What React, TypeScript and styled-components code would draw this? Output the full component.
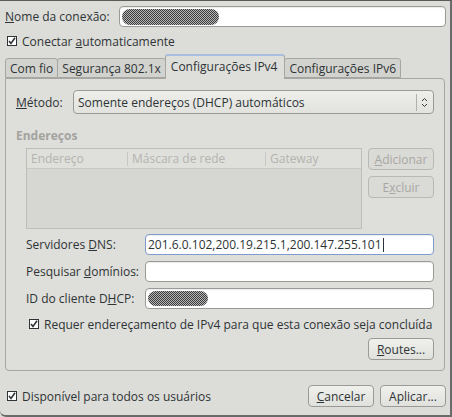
import React from "react";
import styled, { createGlobalStyle } from "styled-components";

const Global = createGlobalStyle`
  html, body { margin: 0; padding: 0; background: #dcdcd8; }
  body { font-family: "Open Sans", "DejaVu Sans", sans-serif; font-size: 12px; color: #2e3436; }
  * { box-sizing: border-box; }
`;

const Window = styled.div`
  width: 452px;
  height: 417px;
  background: #dcdcd8;
  border-top: 1px solid #5a5a5a;
  border-right: 2px solid #6b6b6b;
  border-bottom: 2px solid #6b6b6b;
  border-bottom-left-radius: 6px;
  padding: 5px 4px 0 5px;
  display: flex;
  flex-direction: column;
`;

const Row = styled.div<{ $mt?: number; $h?: number }>`
  display: flex;
  align-items: center;
  margin-top: ${(p) => p.$mt ?? 0}px;
  height: ${(p) => p.$h ?? 21}px;
  flex: none;
`;

const Label = styled.span<{ $w?: number }>`
  width: ${(p) => (p.$w ? `${p.$w}px` : "auto")};
  flex: none;
  white-space: nowrap;
  color: #2e3436;
`;

const U = styled.span`
  text-decoration: underline;
  text-underline-offset: 1px;
`;

const Input = styled.div<{ $focus?: boolean }>`
  flex: 1;
  height: 21px;
  background: #ffffff;
  border: 1px solid ${(p) => (p.$focus ? "#7f9ccc" : "#9a9a96")};
  border-radius: 4px;
  display: flex;
  align-items: center;
  padding-left: 2px;
  box-shadow: inset 0 1px 1px rgba(0, 0, 0, 0.08);
  white-space: nowrap;
  overflow: hidden;
`;

const Caret = styled.span`
  display: inline-block;
  width: 1px;
  height: 14px;
  background: #2e3436;
  margin-left: 1px;
`;

const Blur = styled.span<{ $w: number; $h: number }>`
  display: inline-block;
  width: ${(p) => p.$w}px;
  height: ${(p) => p.$h}px;
  border-radius: ${(p) => p.$h / 2}px;
  background-color: #8a8a8a;
  background-image: repeating-conic-gradient(#3a3a3a 0 25%, #b8b8b8 0 50%);
  background-size: 2px 2px;
`;

const CheckRow = styled.label<{ $ml?: number; $mt?: number }>`
  display: flex;
  align-items: center;
  gap: 5px;
  margin-left: ${(p) => p.$ml ?? 2}px;
  margin-top: ${(p) => p.$mt ?? 0}px;
  height: 18px;
  white-space: nowrap;
  flex: none;
`;

const Box = styled.span`
  width: 10px;
  height: 10px;
  border: 1px solid #2e3436;
  background: #fff;
  display: inline-flex;
  align-items: center;
  justify-content: center;
  flex: none;
`;

const Check = () => (
  <Box>
    <svg width="8" height="8" viewBox="0 0 8 8">
      <path d="M1 4 L3 6.5 L7 0.8" fill="none" stroke="#2e3436" strokeWidth="1.6" />
    </svg>
  </Box>
);

const Tabs = styled.div`
  display: flex;
  align-items: flex-end;
  margin-top: 4px;
  height: 24px;
  position: relative;
  z-index: 1;
  flex: none;
`;

const Tab = styled.div<{ $active?: boolean }>`
  height: ${(p) => (p.$active ? 25 : 20)}px;
  padding: ${(p) => (p.$active ? "0 7px 2px 5px" : "0 4px")};
  display: flex;
  align-items: center;
  border: 1px solid #a6a6a2;
  border-bottom: ${(p) => (p.$active ? "none" : "1px solid #a6a6a2")};
  border-top: ${(p) => (p.$active ? "2px solid #a9bddc" : "1px solid #a6a6a2")};
  border-radius: 3px 3px 0 0;
  background: ${(p) => (p.$active ? "#dededa" : "#d2d2ce")};
  margin-right: -1px;
  margin-bottom: ${(p) => (p.$active ? -1 : 0)}px;
  white-space: nowrap;
`;

const Panel = styled.div`
  height: 293px;
  flex: none;
  margin-right: 1px;
  border: 1px solid #a6a6a2;
  border-radius: 0 4px 4px 4px;
  background: #dededa;
  padding: 11px 10px 0 10px;
  display: flex;
  flex-direction: column;
`;

const Select = styled.div`
  flex: 1;
  height: 24px;
  border: 1px solid #9a9a96;
  border-radius: 4px;
  background: linear-gradient(#eeeeeb, #e2e2df);
  display: flex;
  align-items: center;
  padding-left: 4px;
`;

const SelectText = styled.span`
  flex: 1;
`;

const SelectArrow = styled.span`
  width: 16px;
  height: 17px;
  border-left: 1px solid #b0b0ac;
  display: flex;
  align-items: center;
  justify-content: center;
  margin-right: 1px;
`;

const Section = styled.div`
  margin-top: 14px;
  font-weight: bold;
  color: #a3a3a0;
  height: 16px;
  line-height: 16px;
  flex: none;
`;

const AddrArea = styled.div`
  display: flex;
  margin-top: 4px;
  margin-left: 10px;
  gap: 6px;
  flex: none;
`;

const Table = styled.div`
  width: 337px;
  height: 81px;
  border: 1px solid #bdbdb9;
  background: #d6d6d2;
  display: flex;
  flex-direction: column;
`;

const THead = styled.div`
  height: 20px;
  border-bottom: 1px solid #c8c8c4;
  background: #dfdfdb;
  display: grid;
  grid-template-columns: 100px 138px 1fr;
  align-items: center;
`;

const TH = styled.span<{ $sep?: boolean }>`
  color: #b4b4b0;
  padding-left: 4px;
  border-left: ${(p) => (p.$sep ? "1px solid #c6c6c2" : "none")};
  height: 14px;
  line-height: 14px;
  white-space: nowrap;
`;

const SideButtons = styled.div`
  display: flex;
  flex-direction: column;
  gap: 6px;
`;

const Button = styled.div<{ $disabled?: boolean; $w?: number }>`
  width: ${(p) => p.$w ?? 66}px;
  height: 22px;
  border: 1px solid ${(p) => (p.$disabled ? "#b8b8b4" : "#9a9a96")};
  border-radius: 4px;
  background: ${(p) => (p.$disabled ? "#dadad6" : "linear-gradient(#f0f0ed, #e0e0dd)")};
  color: ${(p) => (p.$disabled ? "#a8a8a4" : "#2e3436")};
  display: flex;
  align-items: center;
  justify-content: center;
  white-space: nowrap;
  flex: none;
`;

const FormRow = styled(Row)`
  margin-left: 10px;
`;

const RightRow = styled.div<{ $mt?: number }>`
  display: flex;
  justify-content: flex-end;
  margin-top: ${(p) => p.$mt ?? 0}px;
  flex: none;
`;

const Footer = styled.div`
  display: flex;
  align-items: center;
  margin-top: 14px;
  gap: 6px;
  flex: none;
`;

const Spacer = styled.div`
  flex: 1;
`;

export default function App() {
  return (
    <>
      <Global />
      <Window>
        <Row $h={21}>
          <Label $w={114}>
            <U>N</U>ome da conexão:
          </Label>
          <Input>
            <Blur $w={97} $h={16} />
          </Input>
        </Row>
        <CheckRow $mt={5}>
          <Check />
          <span>
            Conectar <U>a</U>utomaticamente
          </span>
        </CheckRow>
        <Tabs>
          <Tab>Com fio</Tab>
          <Tab>Segurança 802.1x</Tab>
          <Tab $active>Configurações IPv4</Tab>
          <Tab>Configurações IPv6</Tab>
        </Tabs>
        <Panel>
          <Row $h={24}>
            <Label $w={57}>
              <U>M</U>étodo:
            </Label>
            <Select>
              <SelectText>Somente endereços (DHCP) automáticos</SelectText>
              <SelectArrow>
                <svg width="7" height="11" viewBox="0 0 7 11">
                  <path d="M1 4 L3.5 1.5 L6 4 M1 7 L3.5 9.5 L6 7" fill="none" stroke="#3a3a3a" strokeWidth="1" />
                </svg>
              </SelectArrow>
            </Select>
          </Row>
          <Section>Endereços</Section>
          <AddrArea>
            <Table>
              <THead>
                <TH>Endereço</TH>
                <TH $sep>Máscara de rede</TH>
                <TH $sep>Gateway</TH>
              </THead>
            </Table>
            <SideButtons>
              <Button $disabled>
                <U>A</U>dicionar
              </Button>
              <Button $disabled>
                E<U>x</U>cluir
              </Button>
            </SideButtons>
          </AddrArea>
          <FormRow $mt={5}>
            <Label $w={119}>
              Servidores <U>D</U>NS:
            </Label>
            <Input $focus>
              201.6.0.102,200.19.215.1,200.147.255.101
              <Caret />
            </Input>
          </FormRow>
          <FormRow $mt={6}>
            <Label $w={119}>
              Pesquisar <U>d</U>omínios:
            </Label>
            <Input />
          </FormRow>
          <FormRow $mt={6}>
            <Label $w={119}>
              ID do cliente D<U>H</U>CP:
            </Label>
            <Input>
              <Blur $w={60} $h={15} />
            </Input>
          </FormRow>
          <CheckRow $ml={13} $mt={6}>
            <Check />
            <span>Requer endereçamento de IPv4 para que esta conexão seja concluída</span>
          </CheckRow>
          <RightRow $mt={5}>
            <Button>
              <U>R</U>outes...
            </Button>
          </RightRow>
        </Panel>
        <Footer>
          <CheckRow>
            <Check />
            <span>Disponível para todos os usuários</span>
          </CheckRow>
          <Spacer />
          <Button>
            <U>C</U>ancelar
          </Button>
          <Button>Aplicar...</Button>
        </Footer>
      </Window>
    </>
  );
}
